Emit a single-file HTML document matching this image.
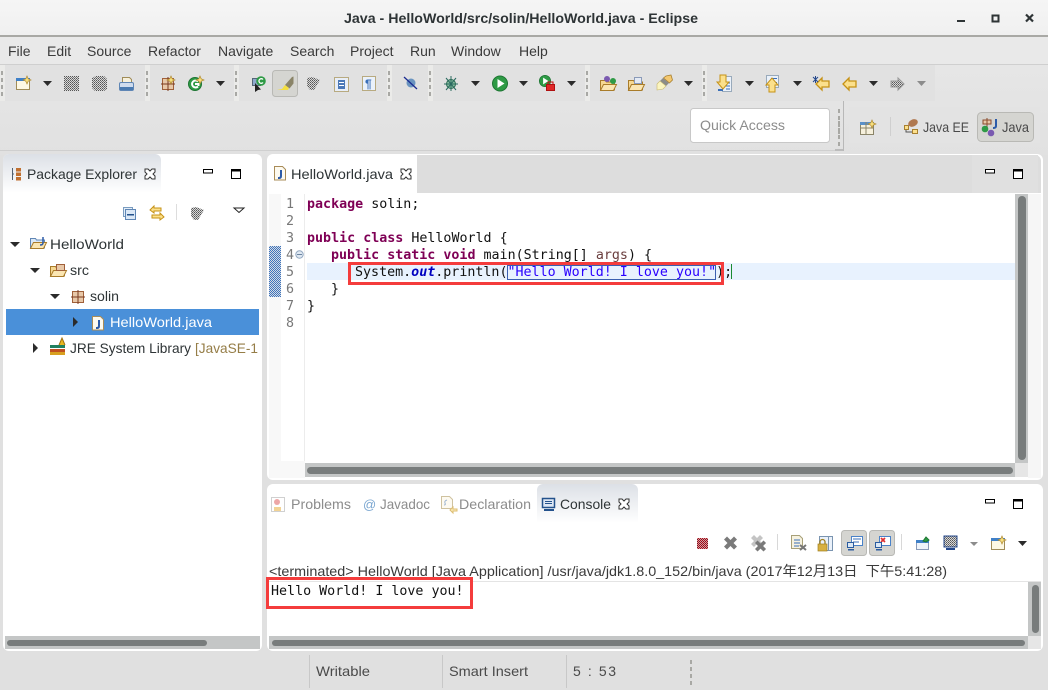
<!DOCTYPE html>
<html><head><meta charset="utf-8"><title>Java - HelloWorld/src/solin/HelloWorld.java - Eclipse</title>
<style>
html,body{margin:0;padding:0;width:1048px;height:690px;overflow:hidden;background:#e0e0e0}
svg{display:block}
text{font-family:"Liberation Sans","Noto Sans CJK SC",sans-serif;font-size:14px;fill:#2e3436}
.m,.m tspan{font-family:"DejaVu Sans Mono","Liberation Mono",monospace;font-size:13.33px;fill:#111}
.k{font-weight:bold;fill:#7f0055!important}
.g{fill:#8c8c8c}
.s{fill:#4a4a4a}
</style></head><body>
<svg width="1048" height="690" viewBox="0 0 1048 690" xmlns="http://www.w3.org/2000/svg">
<defs>
<linearGradient id="tb" x1="0" y1="0" x2="0" y2="1"><stop offset="0" stop-color="#f5f5f5"/><stop offset="1" stop-color="#f0f0f0"/></linearGradient>
<linearGradient id="mid" x1="0" y1="0" x2="0" y2="1"><stop offset="0" stop-color="#e6e6e6"/><stop offset="1" stop-color="#e1e1e1"/></linearGradient>
<linearGradient id="tab" x1="0" y1="0" x2="0" y2="1"><stop offset="0" stop-color="#dce0e6"/><stop offset="1" stop-color="#ffffff"/></linearGradient>
<pattern id="d" width="2" height="2" patternUnits="userSpaceOnUse"><rect width="2" height="2" fill="#d8d8d8"/><rect width="1" height="1" fill="#555"/><rect x="1" y="1" width="1" height="1" fill="#777"/></pattern>
<pattern id="dr" width="2" height="2" patternUnits="userSpaceOnUse"><rect width="2" height="2" fill="#d99"/><rect width="1" height="1" fill="#a01020"/><rect x="1" y="1" width="1" height="1" fill="#801020"/></pattern>
<pattern id="db" width="2" height="2" patternUnits="userSpaceOnUse"><rect width="2" height="2" fill="#d4dbe4"/><rect width="1" height="1" fill="#3f74bc"/><rect x="1" y="1" width="1" height="1" fill="#3f74bc"/></pattern>
<path id="ar" d="M0 0h9l-4.500 5z" fill="#2b2b2b"/>
<path id="tr" d="M0 0h10l-5 5z" fill="#2b2b2b"/>
<g id="grip" fill="#a8a8a4"><rect width="2" height="4"/><rect y="7" width="2" height="4"/><rect y="14" width="2" height="4"/><rect y="21" width="2" height="4"/></g>
<g id="minmax"><rect x=".5" y="1.500" width="9" height="3.500" fill="#fff" stroke="#000"/><rect x="28.500" y="1.500" width="9" height="9" fill="#fff" stroke="#000"/><rect x="28" y="1" width="10" height="2.500" fill="#000"/></g>
<path id="close" d="M1 1h3l2 2 2-2h3v3l-2 2 2 2v3h-3l-2-2-2 2h-3v-3l2-2-2-2z" fill="#fff" stroke="#333"/>
<g id="jf"><path d="M.5.5h8l3 3v10.500h-11z" fill="#fdfaf0" stroke="#a98c58"/><path d="M7 4v6q0 2-2 2h-1" fill="none" stroke="#2d5ba8" stroke-width="2"/></g>
<g id="cross"><rect x=".5" y=".5" width="11" height="11" fill="#e8c8a8" stroke="#a0603a"/><path d="M6 -1v14M-1 6h14" stroke="#7a3a20"/></g>
<path id="star" d="M4 0l1.200 2.800L8 4 5.200 5.200 4 8 2.800 5.200 0 4l2.800-1.200z" fill="#f8e080" stroke="#b08a30" stroke-width=".7"/>
<g id="run"><circle cx="8" cy="8" r="7.500" fill="#2e9a45" stroke="#1d7532"/><path d="M5.500 3.500l7 4.500-7 4.500z" fill="#fff"/></g>
<g id="fold"><path d="M.5 3.500h5l1 1.500h8v8h-14z" fill="#f6d892" stroke="#a97c2a"/><path d="M.5 13.500l3-6h13l-3 6z" fill="#fbe6b2" stroke="#a97c2a"/></g>
<path id="back" d="M1 7l6-6v3h7v6h-7v3z" fill="#fbe08c" stroke="#c69216" stroke-width="1.300"/>
<path id="xx" d="M3 0l3.500 3.500L10 0l3 3-3.500 3.500L13 10l-3 3-3.500-3.500L3 13l-3-3 3.500-3.500L0 3z" fill="#7a7a7a"/>
</defs>

<!-- title bar -->
<rect width="1048" height="36" fill="url(#tb)"/>
<rect y="35" width="1048" height="2" fill="#a9a9a5"/>
<text x="344" y="23" textLength="354" lengthAdjust="spacingAndGlyphs" style="font-weight:bold;font-size:14px">Java - HelloWorld/src/solin/HelloWorld.java - Eclipse</text>
<rect x="957" y="20" width="8" height="2" fill="#2e3436"/>
<rect x="992.500" y="15.500" width="6" height="6" fill="none" stroke="#2e3436" stroke-width="2"/>
<path d="M1026 14.500l7 7m0-7l-7 7" stroke="#2e3436" stroke-width="2.200"/>

<!-- menu -->
<rect y="37" width="1048" height="27" fill="#e9e9e9"/>
<rect y="64" width="1048" height="1" fill="#cfcfcf"/>
<text y="56" class="s" style="fill:#3a3a3a">
<tspan x="8">File</tspan><tspan x="47">Edit</tspan><tspan x="87">Source</tspan><tspan x="148">Refactor</tspan><tspan x="218">Navigate</tspan><tspan x="290">Search</tspan><tspan x="350">Project</tspan><tspan x="410">Run</tspan><tspan x="451">Window</tspan><tspan x="519">Help</tspan></text>

<!-- toolbar backgrounds -->
<rect y="65" width="1048" height="90" fill="url(#mid)"/>
<rect x="5" y="65" width="930" height="36" fill="#e1e1e1"/>
<g fill="#ebebe9"><rect x="0" y="65" width="5" height="36"/><rect x="145" y="65" width="5" height="36"/><rect x="234" y="65" width="5" height="36"/><rect x="387" y="65" width="5" height="36"/><rect x="428" y="65" width="5" height="36"/><rect x="585" y="65" width="5" height="36"/><rect x="702" y="65" width="5" height="36"/></g>
<use href="#grip" x="1" y="71"/><use href="#grip" x="146" y="71"/><use href="#grip" x="235" y="71"/><use href="#grip" x="388" y="71"/><use href="#grip" x="429" y="71"/><use href="#grip" x="586" y="71"/><use href="#grip" x="703" y="71"/>
<g><use href="#ar" x="43" y="81"/><use href="#ar" x="216" y="81"/><use href="#ar" x="471" y="81"/><use href="#ar" x="519" y="81"/><use href="#ar" x="567" y="81"/><use href="#ar" x="684" y="81"/><use href="#ar" x="745" y="81"/><use href="#ar" x="793" y="81"/><use href="#ar" x="869" y="81"/></g>
<path d="M917 81h9l-4.500 5z" fill="#8c8c8c"/>

<!-- new -->
<rect x="16.500" y="78.500" width="13" height="11" fill="#fdf8e4" stroke="#a08c58"/><rect x="16" y="78" width="14" height="3" fill="#3f80c8"/><use href="#star" x="23" y="76"/>
<rect x="64" y="76" width="15" height="15" fill="url(#d)"/>
<path d="M92 78l4-2h8l3 3v10l-3 2h-9l-3-3z" fill="url(#d)"/>
<path d="M122.500 77.500h7l2 2v6h-9z" fill="#f6f0dc" stroke="#a08c58"/><rect x="119.500" y="82.500" width="14" height="8" rx="1.500" fill="#cfdcee" stroke="#5f86b5"/><rect x="120" y="87" width="13" height="3" fill="#4a7ab0"/>
<use href="#cross" x="162" y="78"/><use href="#star" x="167" y="76"/>
<circle cx="195" cy="84" r="6.500" fill="#2e9a45" stroke="#1d7532"/><path d="M198 81.500a3.500 3.500 0 1 0 0 5M195 84h3.500v2" fill="none" stroke="#fff" stroke-width="2"/><use href="#star" x="196" y="76"/>
<!-- open type -->
<path d="M252.500 78.500h8v7h-8z" fill="#8fa8cc" stroke="#567"/><circle cx="261" cy="81" r="4.800" fill="#2e9a45"/><path d="M263 79.500a2.300 2.300 0 1 0 0 3" fill="none" stroke="#fff" stroke-width="1.300"/><path d="M255 83v9l3-2 3-.5z" fill="#222"/>
<rect x="272.500" y="70.500" width="25" height="26" rx="3" fill="#d5d5d1" stroke="#b9b9b5"/>
<path d="M285 85l7-8 1.500-.5v7l-4 5z" fill="#8a8468"/><path d="M277 90l5-1 3-4 4 3-1 2z" fill="#f4df40"/>
<path d="M307 78l5-1 8 3-3 5-3 5h-4l-3-4z" fill="url(#d)"/>
<rect x="334.500" y="77.500" width="14" height="14" fill="#e8eef7" stroke="#b8aa80"/><rect x="338" y="80" width="7" height="9" fill="#4a78b8"/><rect x="339" y="82" width="5" height="1" fill="#fff"/><rect x="339" y="85" width="5" height="1" fill="#fff"/>
<rect x="362.500" y="76.500" width="13" height="14" fill="#eaf1fa" stroke="#b8aa80"/><text x="365" y="88" style="font-size:12px;font-weight:bold;fill:#3a6fb8">¶</text>
<circle cx="411" cy="83" r="4.500" fill="#6a94c0"/><path d="M404 77l13 12" stroke="#1a2a90" stroke-width="1.300"/>
<!-- bug -->
<circle cx="451" cy="84" r="4.500" fill="#8ac0a0" stroke="#2a6a50"/><path d="M444 84h14M446 78l10 12M456 78l-10 12M451 76v15" stroke="#2a6a60"/>
<use href="#run" x="492" y="75.500"/>
<use href="#run" transform="translate(539 75) scale(.75)"/>
<rect x="546.500" y="84.500" width="8" height="6" fill="#e02828" stroke="#b01010"/><path d="M548 84v-2h5v2" fill="none" stroke="#c01010"/>
<use href="#fold" x="600" y="77"/><circle cx="607" cy="79" r="3" fill="#7a5ab0"/><circle cx="613" cy="81" r="3" fill="#2e9a45"/>
<use href="#fold" x="628" y="77"/><rect x="634.500" y="77.500" width="7" height="6" fill="#e4eaf4" stroke="#8a9ab8"/>
<!-- brush -->
<path d="M666 76l5-1 1.500 5-3 3-6-5z" fill="#f4c870" stroke="#a88030" stroke-width=".8"/><path d="M660 81l3-3 6 5-3 3z" fill="#8c8c88"/><path d="M657 84l3-3 6 5-3 3-6 1z" fill="#fbf5c0" stroke="#c8b870" stroke-width=".6"/>
<!-- annotations -->
<rect x="722.500" y="76.500" width="9" height="15" fill="#eaf1fa" stroke="#9ab"/><path d="M726 83h4M726 86h4M726 89h4" stroke="#3a6fb8"/><rect x="718" y="89" width="5" height="2" fill="#3a6fb8"/>
<path d="M720 75h6v7h3l-6 7-6-7h3z" fill="#fbe08c" stroke="#c69216"/>
<rect x="766.500" y="75.500" width="12" height="12" fill="#eaf1fa" stroke="#9ab"/><rect x="771" y="78" width="6" height="1" fill="#3a6fb8"/><rect x="771" y="82" width="6" height="1" fill="#3a6fb8"/>
<path d="M769 92v-7h-3l6-7 6 7h-3v7z" fill="#fbe08c" stroke="#c69216"/>
<use href="#back" x="815" y="77"/><path d="M813 77l5 5m-5 0l5-5m-2.500-1v7" stroke="#24488c"/>
<use href="#back" x="842" y="77"/>
<path d="M904 84l-6-6v3h-7v6h7v3z" fill="url(#d)" stroke="#999"/>

<!-- quick access & perspectives -->
<rect x="690.500" y="108.500" width="139" height="34" rx="3" fill="#fff" stroke="#c8c8c8"/>
<text x="700" y="130" textLength="85" lengthAdjust="spacingAndGlyphs" class="g">Quick Access</text>
<rect x="0" y="150" width="836" height="1" fill="#cfcfcf"/>
<rect x="843" y="101" width="1" height="50" fill="#b8b8b8"/><rect x="835" y="149" width="8" height="2" fill="#bcbcbc"/>
<use href="#grip" x="838" y="109"/><use href="#grip" x="838" y="121"/>
<rect x="849" y="107" width="191" height="36" fill="#e3e3e3"/>
<rect x="860.500" y="122.500" width="13" height="12" fill="#f6f0dc" stroke="#8a8468"/><rect x="860" y="122" width="14" height="3" fill="#5a90c8"/><path d="M866 122v12M860 128h14" stroke="#8a8468"/><use href="#star" x="868" y="120"/>
<rect x="890" y="117" width="1" height="19" fill="#cfcfcf"/>
<rect x="904.500" y="125.500" width="4" height="4" fill="#fce08c" stroke="#a88030"/><rect x="912.500" y="129.500" width="5" height="4" fill="#fce08c" stroke="#a88030"/><path d="M906 130v2h6" fill="none" stroke="#555"/><ellipse cx="913" cy="123" rx="5" ry="3.500" fill="#b07850" transform="rotate(-25 913 123)"/>
<text x="923" y="132" textLength="46" lengthAdjust="spacingAndGlyphs" class="s">Java EE</text>
<rect x="977.500" y="112.500" width="56" height="29" rx="4" fill="#d5d5d1" stroke="#b9b9b5"/>
<path d="M983 124v-4h8v4zM987 118v10" fill="#e8c8a8" stroke="#8a4a2a"/><path d="M996 119v7q0 2-3 2" fill="none" stroke="#2d5ba8" stroke-width="2"/><circle cx="985" cy="129" r="3.300" fill="#2e9a45"/><circle cx="991" cy="133" r="3.300" fill="#7a5ab0"/>
<text x="1002" y="132" textLength="27" lengthAdjust="spacingAndGlyphs" class="s">Java</text>

<!-- package explorer -->
<rect x="3" y="154" width="259" height="497" rx="6" fill="#fff"/>
<path d="M3 193v-33a6 6 0 0 1 6-6h146a6 6 0 0 1 6 6v33z" fill="url(#tab)"/>
<path d="M12.500 168v12M12 174h2" stroke="#506070" fill="none"/><g fill="#c07030"><rect x="16" y="168" width="5" height="3.500"/><rect x="16" y="172.500" width="5" height="3.500"/><rect x="16" y="177" width="5" height="3.500"/></g>
<text x="27" y="179" textLength="110" lengthAdjust="spacingAndGlyphs">Package Explorer</text>
<use href="#close" x="144" y="168"/>
<use href="#minmax" x="203" y="168"/>
<!-- view toolbar -->
<rect x="123.500" y="207.500" width="9" height="9" fill="#e4eef8" stroke="#7a9cc0"/><rect x="125.500" y="209.500" width="10" height="10" fill="#dbe8f6" stroke="#5f86b5"/><rect x="127" y="214" width="7" height="1.500" fill="#24528c"/>
<path d="M150 210l4-4v2h7v3h-7v2zM164 217l-4-4v2h-8v3h8v2z" fill="#fbe08c" stroke="#c69216"/>
<rect x="176" y="204" width="1" height="16" fill="#ddd"/>
<path d="M191 208l5-1 8 3-3 5-3 5h-4l-3-4z" fill="url(#d)"/>
<path d="M234 208h10l-5 4.500z" fill="#fff" stroke="#222"/>
<!-- tree -->
<use href="#tr" x="10" y="242"/><use href="#tr" x="30" y="268"/><use href="#tr" x="50" y="294"/>
<path d="M33 343l5 5-5 5z" fill="#2b2b2b"/>
<g transform="translate(30 235)"><path d="M.5 3.500h5l1 1.500h8v8h-14z" fill="#dbe8f6" stroke="#5f86b5"/><path d="M.5 13.500l3-6h13l-3 6z" fill="#fbe6b2" stroke="#a97c2a"/></g><path d="M43 237v6q0 2-3 2" fill="none" stroke="#2d5ba8" stroke-width="1.500"/>
<text x="50" y="249" textLength="74" lengthAdjust="spacingAndGlyphs">HelloWorld</text>
<use href="#fold" x="50" y="263"/><rect x="56.500" y="264.500" width="8" height="6" fill="#e8c8a8" stroke="#a0603a"/>
<text x="70" y="275" textLength="19" lengthAdjust="spacingAndGlyphs">src</text>
<use href="#cross" x="72" y="291"/>
<text x="90" y="301" textLength="29" lengthAdjust="spacingAndGlyphs">solin</text>
<rect x="6" y="309" width="253" height="26" fill="#4a90d9"/>
<path d="M73 317l5 5-5 5z" fill="#2b2b2b"/>
<use href="#jf" x="92" y="316"/>
<text x="110" y="327" textLength="102" lengthAdjust="spacingAndGlyphs" style="fill:#fff">HelloWorld.java</text>
<rect x="50" y="349" width="15" height="3" fill="#c05020"/><rect x="50" y="345" width="15" height="3" fill="#208060"/><rect x="50" y="352" width="15" height="3" fill="#d8a020"/><path d="M59 345l3-7 3 7" fill="#e8b820" stroke="#a07010"/>
<text x="70" y="353" textLength="121" lengthAdjust="spacingAndGlyphs">JRE System Library</text>
<text x="195" y="353" textLength="63" lengthAdjust="spacingAndGlyphs" style="fill:#957d47">[JavaSE-1</text>
<rect x="5" y="636" width="255" height="13" fill="#c4c6c6"/>
<rect x="7" y="640" width="200" height="6" rx="3" fill="#787c7c"/>

<!-- editor panel -->
<rect x="267" y="154" width="776" height="326" rx="6" fill="#fff"/>
<path d="M417 155h618a6 6 0 0 1 6 6v32H417z" fill="#dddddd"/>
<rect x="972" y="155" width="66" height="38" fill="#e0e0e0"/>
<use href="#jf" x="274" y="166"/>
<text x="291" y="179" textLength="102" lengthAdjust="spacingAndGlyphs">HelloWorld.java</text>
<use href="#close" x="400" y="168"/>
<use href="#minmax" x="985" y="168"/>
<rect x="269" y="194" width="12" height="284" fill="#f8f8f8"/>
<rect x="269" y="461" width="36" height="17" fill="#f8f8f8"/>
<rect x="304" y="194" width="1" height="267" fill="#ececec"/>
<rect x="269" y="246" width="12" height="51" fill="url(#db)"/>
<rect x="307" y="263" width="708" height="17" fill="#e8f2fe"/>
<rect x="1015" y="194" width="13" height="269" fill="#c4c6c6"/>
<rect x="1018" y="196" width="8" height="264" rx="4" fill="#787c7c"/>
<rect x="1028" y="194" width="13" height="284" fill="#f6f6f6"/>
<rect x="305" y="463" width="710" height="14" fill="#c4c6c6"/>
<rect x="307" y="467" width="706" height="7" rx="3.500" fill="#787c7c"/>
<rect x="1015" y="463" width="13" height="14" fill="#e6e6e6"/>
<!-- line numbers -->
<g class="m"><text class="m" y="208" x="286" style="fill:#787878">1</text><text class="m" y="225" x="286" style="fill:#787878">2</text><text class="m" y="242" x="286" style="fill:#787878">3</text><text class="m" y="259" x="286" style="fill:#787878">4</text><text class="m" y="276" x="286" style="fill:#787878">5</text><text class="m" y="293" x="286" style="fill:#787878">6</text><text class="m" y="310" x="286" style="fill:#787878">7</text><text class="m" y="327" x="286" style="fill:#787878">8</text></g>
<circle cx="299.500" cy="254.500" r="3.700" fill="#dfe8f2" stroke="#93a8c0"/><rect x="297" y="254" width="5" height="1" fill="#6a84a0"/>
<!-- code -->
<text class="m" x="307" y="208"><tspan class="k">package</tspan> solin;</text>
<text class="m" x="307" y="242"><tspan class="k">public</tspan> <tspan class="k">class</tspan> HelloWorld {</text>
<text class="m" x="331" y="259"><tspan class="k">public</tspan> <tspan class="k">static</tspan> <tspan class="k">void</tspan> main(String[] <tspan style="fill:#6a3e3e">args</tspan>) {</text>
<rect x="507.500" y="265.500" width="208" height="14" fill="none" stroke="#3a5fb0"/>
<text class="m" x="355" y="276">System.<tspan style="font-weight:bold;font-style:italic;fill:#0000c0">out</tspan>.println(<tspan style="fill:#2a00ff">"Hello World! I love you!"</tspan>);</text>
<rect x="731" y="264" width="1" height="15" fill="#1a8a30"/>
<text class="m" x="331" y="293">}</text>
<text class="m" x="307" y="310">}</text>
<rect x="349.500" y="263.500" width="373" height="20" fill="none" stroke="#f43c3c" stroke-width="3"/>

<!-- console panel -->
<rect x="267" y="484" width="776" height="167" rx="6" fill="#fff"/>
<path d="M537 523v-33a6 6 0 0 1 6-6h89a6 6 0 0 1 6 6v33z" fill="url(#tab)"/>
<g opacity=".55"><rect x="271.500" y="497.500" width="13" height="14" fill="#fff" stroke="#aaa"/><circle cx="277" cy="502" r="3" fill="#e06060"/><rect x="274" y="507" width="7" height="4" fill="#e8b040"/></g>
<text x="291" y="509" textLength="60" lengthAdjust="spacingAndGlyphs" class="g">Problems</text>
<text x="363" y="509" style="font-size:13px;fill:#7aa6d0">@</text>
<text x="380" y="509" textLength="50" lengthAdjust="spacingAndGlyphs" class="g">Javadoc</text>
<g opacity=".6"><path d="M441.500 496.500h8l3 3v9h-11z" fill="#fdf8e8" stroke="#b09a60"/><path d="M450 510l3-3v2h4v2h-4v2z" fill="#fbe08c" stroke="#c69216"/><path d="M447 500q-3 1-2 3q1 2-1 2" fill="none" stroke="#5f86b5"/></g>
<text x="459" y="509" textLength="72" lengthAdjust="spacingAndGlyphs" class="g">Declaration</text>
<rect x="542.500" y="498.500" width="12" height="9" fill="#dfe8f4" stroke="#24528c" stroke-width="1.500"/><rect x="545" y="501" width="7" height="1" fill="#24528c"/><rect x="545" y="503" width="7" height="1" fill="#24528c"/><rect x="544" y="509" width="10" height="2" fill="#24528c"/>
<text x="560" y="509" textLength="51" lengthAdjust="spacingAndGlyphs">Console</text>
<use href="#close" x="618" y="498"/>
<use href="#minmax" x="985" y="498"/>
<!-- console toolbar -->
<rect x="697" y="538" width="11" height="11" fill="url(#dr)"/>
<use href="#xx" x="724" y="536.500"/>
<path d="M3 0l3 3 3-3 3 3-3 3 3 3-3 3-3-3-3 3-3-3 3-3-3-3z" fill="#c4c4c4" transform="translate(751 535)"/><use href="#xx" transform="translate(755 540.500) scale(.85)"/>
<rect x="777" y="534" width="1" height="16" fill="#d8d8d8"/>
<path d="M791.500 535.500h8l3 3v10h-11z" fill="#f6f2e0" stroke="#a8a078"/><path d="M794 540h6M794 543h6M794 546h5" stroke="#3a6fb8"/><path d="M800 545l6 5m0-5l-6 5" stroke="#777" stroke-width="2"/>
<rect x="819.500" y="536.500" width="13" height="14" fill="#eaf1fa" stroke="#7a94b0"/><rect x="828" y="537" width="1" height="13" fill="#7a94b0"/><rect x="818" y="544" width="9" height="7" fill="#d8b040" stroke="#a08020" stroke-width=".7"/><path d="M820 544v-2a2.500 2.500 0 0 1 5 0v2" fill="none" stroke="#a08020" stroke-width="1.300"/>
<rect x="841.500" y="530.500" width="25" height="25" rx="3" fill="#d5d5d1" stroke="#b9b9b5"/>
<rect x="869.500" y="530.500" width="25" height="25" rx="3" fill="#d5d5d1" stroke="#b9b9b5"/>
<rect x="851.500" y="536.500" width="11" height="9" fill="#fff" stroke="#4a82c8"/><path d="M853 539h8M853 542h6" stroke="#3a6fb8"/><rect x="847.500" y="542.500" width="6" height="5" fill="#dbe8f6" stroke="#2a5ca0"/><rect x="848" y="549" width="6" height="1.500" fill="#2a5ca0"/>
<rect x="879.500" y="536.500" width="11" height="9" fill="#fff" stroke="#4a82c8"/><path d="M881 538l4 4m0-4l-4 4" stroke="#e03030" stroke-width="1.700"/><rect x="875.500" y="542.500" width="6" height="5" fill="#dbe8f6" stroke="#2a5ca0"/><rect x="876" y="549" width="6" height="1.500" fill="#2a5ca0"/>
<rect x="901" y="534" width="1" height="16" fill="#d8d8d8"/>
<rect x="916.500" y="540.500" width="12" height="9" fill="#eef3fa" stroke="#8a9ab8"/><rect x="916" y="540" width="13" height="3" fill="#3f80c8"/><path d="M923 541l3-4 3 3-3 2z" fill="#2e9a45" stroke="#1d7532"/>
<rect x="944" y="536" width="13" height="11" fill="url(#d)" stroke="#24488c"/><rect x="946" y="548" width="9" height="2" fill="#24488c"/>
<path d="M970 542h8l-4 4z" fill="#8c8c8c"/>
<rect x="991.500" y="538.500" width="13" height="11" fill="#fdf8e4" stroke="#a08c58"/><rect x="991" y="538" width="14" height="3" fill="#3f80c8"/><use href="#star" x="998" y="536"/>
<use href="#ar" x="1018" y="541"/>
<!-- console text -->
<text x="269" y="576" textLength="678" lengthAdjust="spacingAndGlyphs" style="fill:#3a3a3a">&lt;terminated&gt; HelloWorld [Java Application] /usr/java/jdk1.8.0_152/bin/java (2017年12月13日&#160;&#160;下午5:41:28)</text>
<rect x="267" y="581" width="774" height="1" fill="#e4e4e4"/>
<text class="m" x="271" y="595">Hello World! I love you!</text>
<rect x="267.500" y="578.500" width="204" height="29" fill="none" stroke="#f43c3c" stroke-width="3"/>
<rect x="1028" y="582" width="13" height="54" fill="#c4c6c6"/>
<rect x="1032" y="585" width="7" height="48" rx="3.500" fill="#787c7c"/>
<rect x="269" y="636" width="759" height="13" fill="#c4c6c6"/>
<rect x="272" y="640" width="753" height="6" rx="3" fill="#787c7c"/>
<rect x="1028" y="636" width="13" height="13" fill="#e6e6e6"/>

<!-- status -->
<rect x="309" y="655" width="1" height="33" fill="#c8c8c8"/><rect x="442" y="655" width="1" height="33" fill="#c8c8c8"/><rect x="566" y="655" width="1" height="33" fill="#c8c8c8"/>
<text x="316" y="676" textLength="54" lengthAdjust="spacingAndGlyphs" class="s">Writable</text>
<text x="449" y="676" textLength="79" lengthAdjust="spacingAndGlyphs" class="s">Smart Insert</text>
<text x="573" y="676" textLength="43" lengthAdjust="spacing" class="s">5 : 53</text>
<use href="#grip" x="690" y="660"/>
</svg>
</body></html>
